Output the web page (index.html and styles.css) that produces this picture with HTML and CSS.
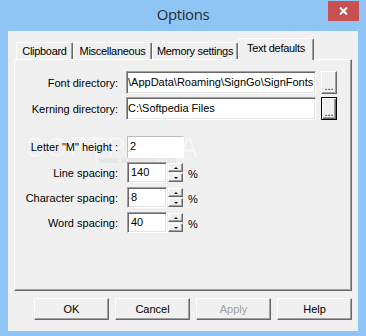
FILE: index.html
```html
<!DOCTYPE html>
<html lang="en">
<head>
  <meta charset="UTF-8">
  <title>Options</title>
  <link rel="stylesheet" href="styles.css">
</head>
<body>

  <div class="window">
    <!-- Barra de título -->
    <div class="titlebar">
      <span class="title">Options</span>
      <span class="close">
        <svg width="9" height="8" viewBox="0 0 9 8">
          <path d="M1 0.5 L8 7.5 M8 0.5 L1 7.5" stroke="#fff" stroke-width="2" fill="none" />
        </svg>
      </span>
    </div>

    <div class="client">
      <!-- Abas -->
      <div class="tabs">
        <div class="tab tab-clip">Clipboard</div>
        <div class="tab tab-misc">Miscellaneous</div>
        <div class="tab tab-mem">Memory settings</div>
        <div class="tab tab-text active">Text defaults</div>
      </div>

      <div class="panel">
        <div class="watermark">SOFTPEDIA</div>
        <div class="watermark-url">www.softpedia.com</div>

        <div class="dirs">
          <label for="fontDir">Font directory:</label>
          <input type="text" id="fontDir" class="field" value="\AppData\Roaming\SignGo\SignFonts">
          <button class="browse">...</button>

          <label for="kernDir">Kerning directory:</label>
          <input type="text" id="kernDir" class="field" value="C:\Softpedia Files">
          <button class="browse default">...</button>
        </div>

        <div class="nums">
          <label for="mHeight">Letter "M" height :</label>
          <div class="num-row">
            <input type="text" id="mHeight" class="flat" value="2">
          </div>

          <label for="lineSp">Line spacing:</label>
          <div class="num-row">
            <input type="text" id="lineSp" class="field short" value="140">
            <span class="spin"><span class="spin-btn"><i class="up"></i></span><span class="spin-btn"><i class="down"></i></span></span>
            <span class="pct">%</span>
          </div>

          <label for="charSp">Character spacing:</label>
          <div class="num-row">
            <input type="text" id="charSp" class="field short" value="8">
            <span class="spin"><span class="spin-btn"><i class="up"></i></span><span class="spin-btn"><i class="down"></i></span></span>
            <span class="pct">%</span>
          </div>

          <label for="wordSp">Word spacing:</label>
          <div class="num-row">
            <input type="text" id="wordSp" class="field short" value="40">
            <span class="spin"><span class="spin-btn"><i class="up"></i></span><span class="spin-btn"><i class="down"></i></span></span>
            <span class="pct">%</span>
          </div>
        </div>
      </div>

      <!-- Botões -->
      <div class="actions">
        <button class="btn">OK</button>
        <button class="btn">Cancel</button>
        <button class="btn" disabled>Apply</button>
        <button class="btn">Help</button>
      </div>
    </div>
  </div>

</body>
</html>
```

FILE: styles.css
```css
body {
  margin: 0;
  font-family: "Liberation Sans", Arial, sans-serif;
  font-size: 11px;
  color: #000;
}

.window {
  width: 366px;
  height: 336px;
  background: #8ec5f5;
  display: flex;
  flex-direction: column;
}

.titlebar {
  height: 31px;
  position: relative;
  display: flex;
  justify-content: center;
  align-items: center;
}
.title {
  font-family: "Open Sans", "Noto Sans", sans-serif;
  font-size: 15px;
  letter-spacing: -0.4px;
  color: #2b2b2b;
  margin-top: -3px;
}
.close {
  position: absolute;
  top: 1px;
  right: 7px;
  width: 31px;
  height: 20px;
  background: #c75050;
  display: flex;
  align-items: center;
  justify-content: center;
}

.client {
  flex: 1;
  margin: 0 8px 5px;
  padding: 7px 6px 0;
  background: #f0f0f0;
  display: flex;
  flex-direction: column;
}

/* abas */
.tabs {
  display: flex;
  align-items: flex-end;
  height: 21px;
  padding-left: 2px;
}
.tab {
  box-sizing: border-box;
  height: 17px;
  line-height: 16px;
  text-align: center;
  letter-spacing: -0.3px;
  border: 1px solid;
  border-bottom: none;
  border-color: #fff #696969 transparent #fff;
  border-radius: 2px 2px 0 0;
  box-shadow: inset -1px 0 #a0a0a0;
  white-space: nowrap;
}
.tab-clip { width: 57px; }
.tab-misc { width: 79px; }
.tab-mem { width: 86px; }
.tab-text { width: 76px; }
.tab.active {
  height: 22px;
  margin-bottom: -1px;
  line-height: 19px;
  background: #f0f0f0;
  position: relative;
  z-index: 1;
}

.panel {
  box-sizing: border-box;
  height: 232px;
  border: 1px solid;
  border-color: #fff #696969 #696969 #fff;
  box-shadow: inset -1px -1px #a0a0a0;
  position: relative;
  z-index: 0;
}

.watermark {
  position: absolute;
  left: 10px;
  top: 71px;
  z-index: -1;
  font-size: 29px;
  font-weight: bold;
  letter-spacing: 1px;
  color: #f6f6f6;
  text-shadow: 0 0 1px #d4d4d4;
}
.watermark-url {
  position: absolute;
  left: 84px;
  top: 95px;
  z-index: -1;
  font-size: 9px;
  color: #dcdcdc;
}

label {
  text-align: right;
  white-space: nowrap;
}

.dirs {
  display: grid;
  grid-template-columns: 106px 190px 16px;
  grid-auto-rows: 23px;
  column-gap: 5px;
  row-gap: 3px;
  align-items: center;
  margin-top: 11px;
}
.dirs label {
  margin-right: 3px;
}

.field {
  box-sizing: border-box;
  height: 23px;
  width: 190px;
  margin: 0;
  padding: 0 1px 2px;
  font: inherit;
  color: #000;
  background: #fff;
  border: 1px solid;
  border-color: #a0a0a0 #fff #fff #a0a0a0;
  box-shadow: inset 1px 1px #696969, inset -1px -1px #e3e3e3;
  outline: none;
}
.field.short {
  width: 40px;
  height: 21px;
  padding-left: 3px;
}

.browse {
  box-sizing: border-box;
  width: 16px;
  height: 23px;
  margin: 0;
  padding: 6px 0 0;
  font: inherit;
  line-height: 10px;
  background: #f0f0f0;
  border: 1px solid;
  border-color: #fff #696969 #696969 #fff;
  box-shadow: inset -1px -1px #a0a0a0;
}
.browse.default {
  border-color: #000;
  box-shadow: inset 1px 1px #fff, inset -1px -1px #696969, inset -2px -2px #a0a0a0;
}

.nums {
  display: grid;
  grid-template-columns: 103px auto;
  grid-template-rows: 22px 21px 21px 21px;
  column-gap: 9px;
  row-gap: 4px;
  align-items: center;
  margin-top: 16px;
}
.num-row {
  display: flex;
  align-items: center;
  height: 100%;
}

.flat {
  box-sizing: border-box;
  width: 57px;
  height: 22px;
  margin: 0;
  padding: 0 2px 2px;
  font: inherit;
  background: #fff;
  border: 1px solid;
  border-color: #bdbdbd #fff #fff #bdbdbd;
  outline: none;
}

.spin {
  display: flex;
  flex-direction: column;
  justify-content: space-between;
  height: 19px;
  margin-left: 1px;
}
.spin-btn {
  box-sizing: border-box;
  width: 15px;
  height: 9px;
  display: flex;
  align-items: center;
  justify-content: center;
  background: #f0f0f0;
  border: 1px solid;
  border-color: #fff #696969 #696969 #fff;
  box-shadow: inset -1px -1px #a0a0a0;
}
.spin-btn i {
  width: 0;
  height: 0;
  border-left: 2px solid transparent;
  border-right: 2px solid transparent;
}
.spin-btn .up { border-bottom: 2px solid #000; }
.spin-btn .down { border-top: 2px solid #000; }

.pct {
  margin-left: 5px;
  margin-top: 2px;
}

/* botões de baixo */
.actions {
  display: flex;
  justify-content: flex-end;
  gap: 6px;
  margin-top: 7px;
}
.btn {
  box-sizing: border-box;
  width: 75px;
  height: 22px;
  margin: 0;
  padding: 0 0 1px;
  font: inherit;
  color: #000;
  background: #f0f0f0;
  border: 1px solid;
  border-color: #fff #696969 #696969 #fff;
  box-shadow: inset -1px -1px #a0a0a0;
}
.btn:disabled {
  color: #a0a0a0;
}
```
